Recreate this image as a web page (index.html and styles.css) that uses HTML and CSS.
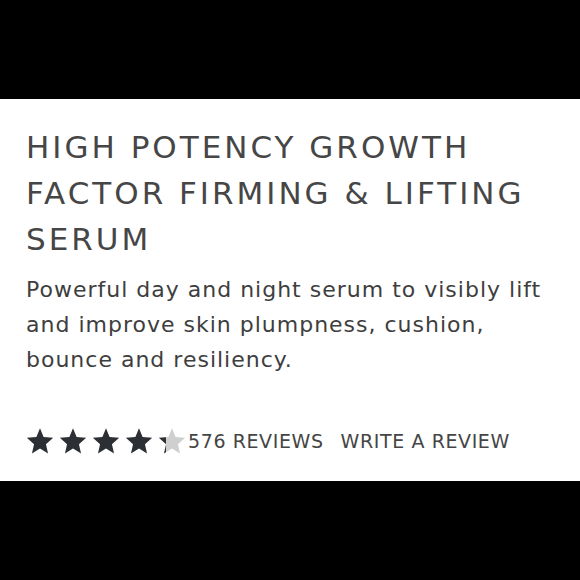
FILE: index.html
```html
<!DOCTYPE html>
<html lang="en">
<head>
    <meta charset="UTF-8">
    <meta name="viewport" content="width=device-width, initial-scale=1.0">
    <title>High Potency Growth Factor Firming &amp; Lifting Serum</title>
    <link rel="stylesheet" href="styles.css">
</head>
<body>
    <div class="band"></div>

    <div class="product">
        <h1 class="product-title">HIGH POTENCY GROWTH FACTOR FIRMING &amp; LIFTING SERUM</h1>
        <p class="product-desc">Powerful day and night serum to visibly lift and improve skin plumpness, cushion, bounce and resiliency.</p>

        <div class="rating">
            <div class="stars">
                <svg class="star" viewBox="0 0 24 24"><polygon points="12,1 15.1,8.6 23.3,9.3 17.1,14.7 18.9,22.8 12,18.5 5.1,22.8 6.9,14.7 0.7,9.3 8.9,8.6" fill="#2c2f34"/></svg>
                <svg class="star" viewBox="0 0 24 24"><polygon points="12,1 15.1,8.6 23.3,9.3 17.1,14.7 18.9,22.8 12,18.5 5.1,22.8 6.9,14.7 0.7,9.3 8.9,8.6" fill="#2c2f34"/></svg>
                <svg class="star" viewBox="0 0 24 24"><polygon points="12,1 15.1,8.6 23.3,9.3 17.1,14.7 18.9,22.8 12,18.5 5.1,22.8 6.9,14.7 0.7,9.3 8.9,8.6" fill="#2c2f34"/></svg>
                <svg class="star" viewBox="0 0 24 24"><polygon points="12,1 15.1,8.6 23.3,9.3 17.1,14.7 18.9,22.8 12,18.5 5.1,22.8 6.9,14.7 0.7,9.3 8.9,8.6" fill="#2c2f34"/></svg>
                <svg class="star" viewBox="0 0 24 24">
                    <defs>
                        <linearGradient id="part" x1="0" x2="1" y1="0" y2="0">
                            <stop offset="0.27" stop-color="#2c2f34"/>
                            <stop offset="0.27" stop-color="#cfcfcf"/>
                        </linearGradient>
                    </defs>
                    <polygon points="12,1 15.1,8.6 23.3,9.3 17.1,14.7 18.9,22.8 12,18.5 5.1,22.8 6.9,14.7 0.7,9.3 8.9,8.6" fill="url(#part)"/>
                </svg>
            </div>
            <span class="review-count">576 REVIEWS</span>
            <a class="write-review" href="#">WRITE A REVIEW</a>
        </div>
    </div>

    <div class="band"></div>
</body>
</html>
```

FILE: styles.css
```css
body {
    margin: 0;
    background: #fff;
    font-family: "DejaVu Sans", Verdana, sans-serif;
    color: #3a3a3a;
}
.band {
    height: 99px;
    background: #000;
}
.product {
    height: 382px;
    box-sizing: border-box;
    padding: 25px 20px 0 26px;
}
.product-title {
    margin: 0;
    font-size: 31px;
    font-weight: 400;
    line-height: 46px;
    letter-spacing: 3px;
    color: #464646;
    max-width: 520px;
}
.product-desc {
    margin: 10px 0 0;
    font-size: 22px;
    line-height: 35px;
    letter-spacing: 1px;
    color: #3e3e3e;
    max-width: 530px;
}
.rating {
    display: flex;
    align-items: center;
    margin-top: 50px;
    font-size: 19px;
    letter-spacing: 0.6px;
    color: #454545;
}
.stars {
    display: flex;
    gap: 5px;
}
.star {
    width: 28px;
    height: 28px;
    display: block;
}
.review-count {
    margin-left: 2px;
}
.write-review {
    margin-left: 17px;
    color: inherit;
    text-decoration: none;
}
```
